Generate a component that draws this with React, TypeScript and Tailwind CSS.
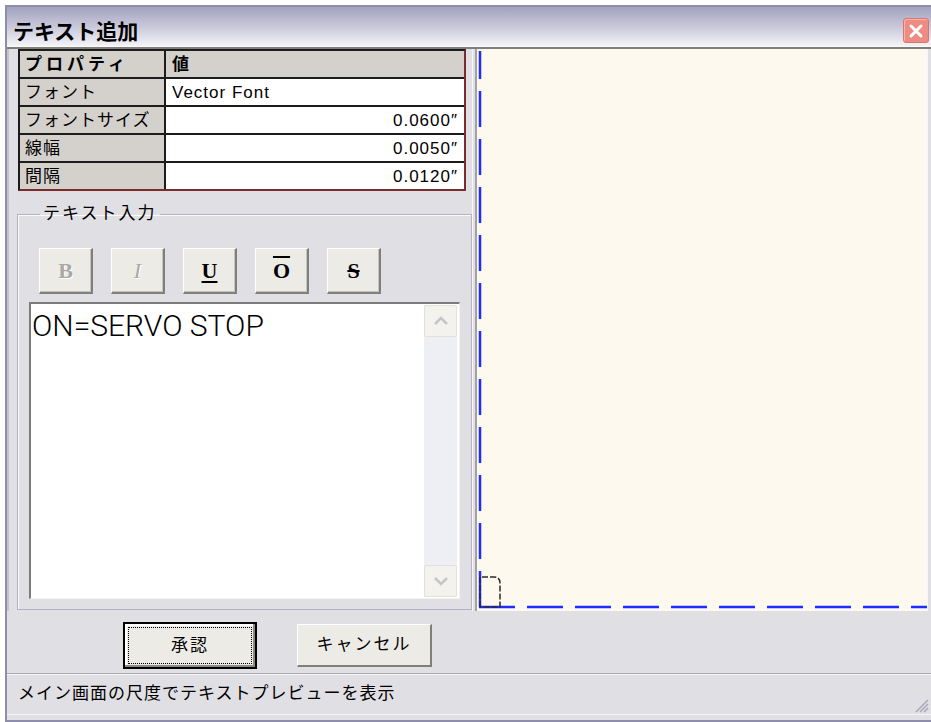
import React from 'react';

type Row = { name: string; value: string; right?: boolean };

const ROWS: Row[] = [
  { name: 'フォント', value: 'Vector Font' },
  { name: 'フォントサイズ', value: '0.0600″', right: true },
  { name: '線幅', value: '0.0050″', right: true },
  { name: '間隔', value: '0.0120″', right: true },
];

const CloseButton: React.FC = () => (
  <div className="w-[26px] h-[25px] rounded-[3px] bg-[#ee8b83] border border-[#d9766e] flex items-center justify-center shadow-[inset_1px_1px_0_#f7b3ad]">
    <svg width="16" height="16" viewBox="0 0 16 16">
      <path d="M3 3 L13 13 M13 3 L3 13" stroke="#fff" strokeWidth="3" strokeLinecap="round" />
    </svg>
  </div>
);

const PropertyGrid: React.FC = () => (
  <div className="ml-[9px] w-[448px] border-t-2 border-l-2 border-t-[#1c1c1c] border-l-[#1c1c1c] border-r-2 border-b-2 border-r-[#7a2b2b] border-b-[#7a2b2b] text-[17px] leading-none">
    <div className="grid grid-cols-[146px_1fr] h-[28px] border-b-2 border-[#1c1c1c] bg-[#d4d1cc]">
      <div className="flex items-center pl-[5px] border-r-2 border-[#1c1c1c] font-bold tracking-[4px]">プロパティ</div>
      <div className="flex items-center pl-[6px] font-bold">値</div>
    </div>
    {ROWS.map((r, i) => (
      <div
        key={r.name}
        className={`grid grid-cols-[146px_1fr] ${i < ROWS.length - 1 ? 'h-[28px] border-b-2 border-[#1c1c1c]' : 'h-[26px]'}`}
      >
        <div className="flex items-center pl-[5px] bg-[#d4d1cc] border-r-2 border-[#1c1c1c] tracking-[1px]">{r.name}</div>
        <div className={`flex items-center bg-white tracking-[1px] ${r.right ? 'justify-end pr-[6px]' : 'pl-[6px]'}`}>{r.value}</div>
      </div>
    ))}
  </div>
);

const StyleButton: React.FC<{ children: React.ReactNode; className?: string }> = ({ children, className }) => (
  <div className="w-[54px] h-[46px] flex items-center justify-center bg-[#ecebe6] border-t border-l border-white border-r-2 border-b-2 border-r-[#7f7f7b] border-b-[#7f7f7b] shadow-[inset_-1px_-1px_0_#c4c3bd]">
    <span className={`font-['Liberation_Serif',serif] text-[22px] font-bold leading-none ${className ?? ''}`}>{children}</span>
  </div>
);

const ScrollArrow: React.FC<{ up?: boolean }> = ({ up }) => (
  <div className="h-[32px] rounded-[2px] bg-[#f3f2ec] border border-[#e3e2da] flex items-center justify-center">
    <svg width="16" height="10" viewBox="0 0 16 10">
      <path d={up ? 'M2 8 L8 2 L14 8' : 'M2 2 L8 8 L14 2'} fill="none" stroke="#c5c5c8" strokeWidth="2.5" />
    </svg>
  </div>
);

const TextInput: React.FC = () => (
  <fieldset className="ml-[8px] mt-[13px] w-[455px] h-[406px] border border-[#b3b2c0] shadow-[inset_1px_1px_0_#fafafa] px-[11px]">
    <legend className="ml-[11px] px-[3px] text-[17px] leading-[20px] tracking-[2px]">テキスト入力</legend>
    <div className="flex gap-[18px] ml-[10px] mt-[24px]">
      <StyleButton className="text-[#a9a9a6] [text-shadow:1px_1px_0_#fff]">B</StyleButton>
      <StyleButton className="italic font-normal text-[#a9a9a6] [text-shadow:1px_1px_0_#fff]">I</StyleButton>
      <StyleButton className="underline underline-offset-[3px] decoration-2">U</StyleButton>
      <StyleButton className="overline decoration-2">O</StyleButton>
      <StyleButton className="line-through decoration-2">S</StyleButton>
    </div>
    <div className="mt-[8px] h-[297px] flex bg-white border-t-2 border-l-2 border-[#7b7b7b] border-r border-b border-r-[#f4f3ec] border-b-[#f4f3ec]">
      <div className="flex-1 pl-[1px] pt-[7px] font-['Roboto',sans-serif] font-light text-[30px] leading-none">ON=SERVO STOP</div>
      <div className="w-[33px] my-[1px] mr-[2px] flex flex-col bg-[#eeeff4]">
        <ScrollArrow up />
        <div className="flex-1" />
        <ScrollArrow />
      </div>
    </div>
  </fieldset>
);

const Preview: React.FC = () => (
  <div className="relative w-[450px] bg-[#fdf9ee]">
    {/* layout guides and caret box of the scaled preview */}
    <svg className="absolute inset-0" width="450" height="562" viewBox="0 0 450 562">
      <path d="M3 558 V2" stroke="#1f2cff" strokeWidth="2.5" strokeDasharray="36 12" />
      <path d="M2 558 H450" stroke="#1f2cff" strokeWidth="2.5" strokeDasharray="36 12" />
      <path d="M3 558 V528 H17 Q23 528 23 534 V558 Z" fill="none" stroke="#2a2a2a" strokeWidth="1.5" strokeDasharray="6 2" />
    </svg>
  </div>
);

const App: React.FC = () => {
  return (
    <div className="w-[931px] h-[722px] bg-white pt-[5px] pl-[5px] overflow-hidden text-black font-['Liberation_Sans','Noto_Sans_CJK_JP',sans-serif]">
      <div className="h-[717px] flex flex-col bg-[#e0dfe3] border-l-2 border-t-2 border-[#8e8dab]">
        {/* title bar */}
        <div className="h-[40px] flex items-end justify-between pl-[6px] pr-[2px] pb-[3px] bg-gradient-to-b from-[#a3a2bf] via-[#c9c8da] to-[#f3f3f7] border-b border-[#fbfbfd]">
          <span className="text-[21px] font-bold leading-none mb-[2px] font-['Noto_Sans_CJK_JP',sans-serif]">テキスト追加</span>
          <CloseButton />
        </div>

        {/* body */}
        <div className="h-[564px] flex border-t-2 border-[#7e7d76]">
          <div className="w-[465px] flex flex-col border-l-2 border-[#c4c3cf]">
            <PropertyGrid />
            <TextInput />
          </div>
          <div className="w-[5px] border-l border-[#f7f7f9] border-r-2 border-r-[#a2a1ab]" />
          <Preview />
          <div className="w-[4px] border-l border-[#f6f6f8]" />
        </div>

        {/* dialog buttons */}
        <div className="h-[62px] flex items-start pt-[11px] pl-[116px] gap-[40px] text-[17px]">
          <button className="w-[134px] h-[47px] border-2 border-black bg-[#ecebe6] p-[3px] shadow-[inset_-2px_-2px_0_#8a8a86,inset_2px_2px_0_#fff]">
            <div className="h-full flex items-center justify-center border border-dotted border-black tracking-[2px]">承認</div>
          </button>
          <button className="w-[135px] h-[43px] mt-[2px] bg-[#ecebe6] border-t border-l border-white border-r-2 border-b-2 border-r-[#7f7f7b] border-b-[#7f7f7b] tracking-[2px]">
            キャンセル
          </button>
        </div>

        {/* status bar */}
        <div className="relative h-[41px] flex items-center pl-[11px] border-t border-[#a7a6b1] shadow-[inset_0_1px_0_#fafafa] text-[17px] tracking-[1px]">
          メイン画面の尺度でテキストプレビューを表示
          <svg className="absolute right-[2px] bottom-[1px]" width="16" height="16" viewBox="0 0 16 16">
            <path d="M15 3 L3 15 M15 7 L7 15 M15 11 L11 15" stroke="#a9a8b4" strokeWidth="1.5" />
          </svg>
        </div>
        <div className="flex-1 border-t border-[#f6f6f8] border-b-2 border-b-[#8e8dab]" />
      </div>
    </div>
  );
};

export default App;
